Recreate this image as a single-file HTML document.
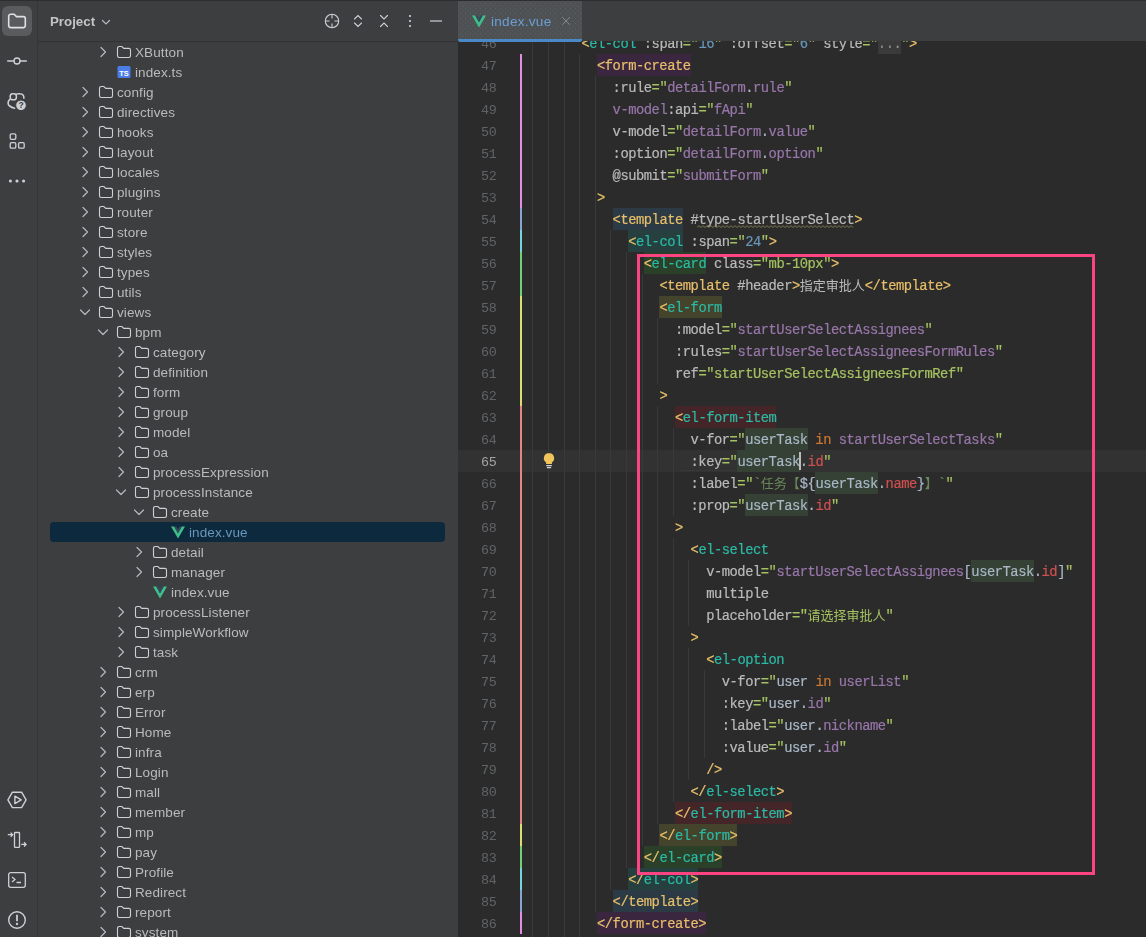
<!DOCTYPE html>
<html lang="zh"><head><meta charset="utf-8"><title>index.vue</title>
<style>
*{box-sizing:border-box;margin:0;padding:0}
html,body{width:1146px;height:937px;overflow:hidden;background:#3C3E40}
body{position:relative;font-family:"Liberation Sans","Noto Sans CJK SC",sans-serif;font-size:13px;color:#BBBBBB}
#topline{position:absolute;left:0;top:0;width:1146px;height:1px;background:#2D2D2E;z-index:20}
#strip{position:absolute;left:0;top:0;width:38px;height:937px;background:#3C3E40;border-right:1px solid #353638}
#strip .btn{position:absolute;left:2px;top:6px;width:30px;height:30px;border-radius:6px;background:#595B5D}
#strip svg{position:absolute;left:7px}
#proj{position:absolute;left:38px;top:0;width:420px;height:937px;background:#3C3E40;overflow:hidden}
#phead{position:absolute;left:0;top:0;width:420px;height:42px;border-bottom:1px solid #323232}
#phead .ttl{position:absolute;left:12px;top:0;line-height:44px;will-change:transform;font-weight:bold;color:#C4C4C4;font-size:13.3px}
#phead svg{position:absolute;top:13px}
.row{position:absolute;left:12px;width:395px;height:20px;margin-left:-38px;padding:0}
#tree{position:absolute;left:0;top:0;width:420px;height:937px}
#tree .row{left:50px;margin-left:-38px}
.row.sel{background:#0D293E;border-radius:4px}
.row .ic{position:absolute;top:2px;margin-left:-50px}
.row .tx{position:absolute;top:0;line-height:22px;height:20px;margin-left:-50px;white-space:pre;color:#BBBBBB;font-size:13.5px;letter-spacing:0.1px;will-change:transform}
.row .tx.mod{color:#6897BB}
#ed{position:absolute;left:458px;top:0;width:688px;height:937px;background:#2B2B2B;overflow:hidden}
#tabs{position:absolute;left:0;top:0;width:688px;height:41px;background:#3C3E40;z-index:10}
#tab{position:absolute;left:0;top:1px;width:124px;height:41px;background-color:#4E5153;background-image:radial-gradient(circle,#5D6062 0.5px,transparent 0.9px),radial-gradient(circle,#5D6062 0.5px,transparent 0.9px);background-size:5px 5px;background-position:0 0,2.5px 2.5px;border-bottom:3px solid #4A88C7;border-radius:0 0 2px 2px}
#tab .nm{position:absolute;left:33px;top:0;line-height:42px;color:#6A9FD4;font-size:13.6px;letter-spacing:0.25px;will-change:transform}
#tab svg{position:absolute}
.ln{position:absolute;left:0;width:38.5px;text-align:right;height:22px;line-height:26px;will-change:transform;font-family:"Liberation Mono",monospace;font-size:13.4px;letter-spacing:-0.24px;color:#606366}
.ln.cur{color:#A4A3A3}
.cl{position:absolute;left:61.2px;height:22px;line-height:26px;white-space:pre;font-family:"Liberation Mono","Noto Sans CJK SC",monospace;font-size:13.8px;letter-spacing:-0.4813px;color:#A9B7C6;will-change:transform;-webkit-text-stroke:0.2px}
.cl span{display:inline-block;height:22px;line-height:26px;vertical-align:top}
.cl .cj, .cl .x{font-family:"Liberation Mono","Noto Sans CJK SC",monospace;font-size:13px;letter-spacing:0;-webkit-text-stroke:0}
.t{color:#E8BF6A}.c{color:#2BBAA5}.a{color:#BABABA}.s{color:#A5C261}.p{color:#9876AA}.n{color:#6897BB}
.d{color:#A9B7C6}.k{color:#CC7832}.r{color:#CF5050}.g{color:#6A8759}.x{color:#BBBBBB}
.fold{color:#8C8C8C;background:#3A3A3A}
.h1{background:#3B2640}.h2{background:#2C3A45}.h3{background:#25403F}.h4{background:#2A4028}.h5{background:#44432B}.h6{background:#452628}
.idh{background:#344134}
.wavy{position:relative}
.wavy svg{position:absolute;left:-1px;top:16.5px}
.caret{width:0;position:relative}
.caret:after{content:"";position:absolute;left:-1px;top:2px;width:2px;height:18px;background:#BBBBBB}
#curline{position:absolute;left:0;top:450px;width:688px;height:22px;background:#323232}
.gd{position:absolute;width:1px;background:#393939;margin-left:-458px}
.st{position:absolute;left:62px;width:2px}
#pink{position:absolute;left:179px;top:254px;width:458px;height:621px;border:3px solid #FC4482;z-index:5}
#dots{position:absolute;left:220px;top:470px;width:58px;height:1px;background-image:linear-gradient(to right,#3E3E3E 50%,transparent 50%);background-size:2px 1px}
</style></head>
<body>
<div id="strip"><div class="btn"></div><svg style="top:11px" width="20" height="20" viewBox="0 0 20 20"><path d="M1.7 5.2 a2 2 0 0 1 2 -2 h3.4 l2.4 2.4 h6.8 a2 2 0 0 1 2 2 v7 a2 2 0 0 1 -2 2 h-12.6 a2 2 0 0 1 -2 -2 z" fill="none" stroke="#DFE1E5" stroke-width="1.6"/></svg><svg style="top:51px" width="20" height="20" viewBox="0 0 20 20"><circle cx="10" cy="10" r="3" fill="none" stroke="#CED0D6" stroke-width="1.4"/><path d="M0.2 10 H7 M13 10 H19.8" stroke="#CED0D6" stroke-width="1.4"/></svg><svg style="top:91px" width="20" height="20" viewBox="0 0 20 20"><rect x="3.2" y="2.8" width="6.2" height="6" rx="2.6" fill="none" stroke="#CED0D6" stroke-width="1.5"/><path d="M9.6 3.2 C10.4 2.7 11.6 2.6 13 2.8 C15.6 3.1 17 4.8 16.9 7.2" fill="none" stroke="#CED0D6" stroke-width="1.5" stroke-linecap="round"/><path d="M2.6 8.6 C0.6 10.2 0.6 13.6 2.6 15 C3.9 16 5.8 16.9 7.6 17.2" fill="none" stroke="#CED0D6" stroke-width="1.6" stroke-linecap="round"/><circle cx="14" cy="14.3" r="5.3" fill="#CED0D6" stroke="#3C3E40" stroke-width="1"/><text x="14" y="17.3" font-size="8.5" font-weight="bold" font-family="Liberation Sans, sans-serif" fill="#3C3E40" text-anchor="middle">?</text></svg><svg style="top:131px" width="20" height="20" viewBox="0 0 20 20"><rect x="3.2" y="2.8" width="5.6" height="5.6" rx="1.3" fill="none" stroke="#CED0D6" stroke-width="1.3"/><rect x="3.2" y="11.6" width="5.6" height="5.6" rx="1.3" fill="none" stroke="#CED0D6" stroke-width="1.3"/><rect x="11.6" y="11.6" width="5.6" height="5.6" rx="1.3" fill="none" stroke="#CED0D6" stroke-width="1.3"/></svg><svg style="top:171px" width="20" height="20" viewBox="0 0 20 20"><circle cx="3.4" cy="10" r="1.55" fill="#CED0D6"/><circle cx="10" cy="10" r="1.55" fill="#CED0D6"/><circle cx="16.6" cy="10" r="1.55" fill="#CED0D6"/></svg><svg style="top:790px" width="20" height="20" viewBox="0 0 20 20"><path d="M5.4 2.2 H14.6 L19.1 9.9 L14.6 17.6 H5.4 L0.9 9.9 Z" fill="none" stroke="#CED0D6" stroke-width="1.4" stroke-linejoin="round"/><path d="M7.9 6.2 L14.2 9.9 L7.9 13.6 Z" fill="none" stroke="#CED0D6" stroke-width="1.4" stroke-linejoin="round"/></svg><svg style="top:830px" width="20" height="20" viewBox="0 0 20 20"><rect x="7.5" y="2.5" width="5" height="14.8" rx="0.6" fill="none" stroke="#CED0D6" stroke-width="1.3"/><path d="M0.8 4.7 H5.4 M3.6 2.6 L5.7 4.7 L3.6 6.8 M14.2 14.4 H18.8 M17 12.3 L19.1 14.4 L17 16.5" fill="none" stroke="#CED0D6" stroke-width="1.3"/></svg><svg style="top:870px" width="20" height="20" viewBox="0 0 20 20"><rect x="1.7" y="2.7" width="16.6" height="14.6" rx="2" fill="none" stroke="#CED0D6" stroke-width="1.3"/><path d="M5 7 L8 9.5 L5 12 M9.5 12.5 H14" fill="none" stroke="#CED0D6" stroke-width="1.3"/></svg><svg style="top:910px" width="20" height="20" viewBox="0 0 20 20"><circle cx="10" cy="10" r="8.3" fill="none" stroke="#CED0D6" stroke-width="1.4"/><path d="M10 4.8 V11.3" stroke="#CED0D6" stroke-width="1.8"/><circle cx="10" cy="14" r="1.15" fill="#CED0D6"/></svg></div>
<div id="proj">
<div id="tree">
<div class="row" style="top:42px"><svg class="ic" style="left:95px" width="16" height="16" viewBox="0 0 16 16"><path d="M6 3.5 L10.5 8 L6 12.5" fill="none" stroke="#B4B8BF" stroke-width="1.2" stroke-linecap="round" stroke-linejoin="round"/></svg><svg class="ic" style="left:116px" width="16" height="16" viewBox="0 0 16 16"><path d="M1.5 4.2 a1.7 1.7 0 0 1 1.7 -1.7 h2.7 l1.9 1.9 h5 a1.7 1.7 0 0 1 1.7 1.7 v5.7 a1.7 1.7 0 0 1 -1.7 1.7 h-9.6 a1.7 1.7 0 0 1 -1.7 -1.7 z" fill="none" stroke="#CED0D6" stroke-width="1.1"/></svg><span class="tx" style="left:135px">XButton</span></div>
<div class="row" style="top:62px"><svg class="ic" style="left:116px" width="16" height="16" viewBox="0 0 16 16"><rect x="1.5" y="2" width="13" height="12" rx="1.5" fill="#4A7DE8"/><text x="8" y="11.6" font-family="Liberation Sans, sans-serif" font-weight="bold" font-size="7.5" fill="#fff" text-anchor="middle">TS</text></svg><span class="tx" style="left:135px">index.ts</span></div>
<div class="row" style="top:82px"><svg class="ic" style="left:77px" width="16" height="16" viewBox="0 0 16 16"><path d="M6 3.5 L10.5 8 L6 12.5" fill="none" stroke="#B4B8BF" stroke-width="1.2" stroke-linecap="round" stroke-linejoin="round"/></svg><svg class="ic" style="left:98px" width="16" height="16" viewBox="0 0 16 16"><path d="M1.5 4.2 a1.7 1.7 0 0 1 1.7 -1.7 h2.7 l1.9 1.9 h5 a1.7 1.7 0 0 1 1.7 1.7 v5.7 a1.7 1.7 0 0 1 -1.7 1.7 h-9.6 a1.7 1.7 0 0 1 -1.7 -1.7 z" fill="none" stroke="#CED0D6" stroke-width="1.1"/></svg><span class="tx" style="left:117px">config</span></div>
<div class="row" style="top:102px"><svg class="ic" style="left:77px" width="16" height="16" viewBox="0 0 16 16"><path d="M6 3.5 L10.5 8 L6 12.5" fill="none" stroke="#B4B8BF" stroke-width="1.2" stroke-linecap="round" stroke-linejoin="round"/></svg><svg class="ic" style="left:98px" width="16" height="16" viewBox="0 0 16 16"><path d="M1.5 4.2 a1.7 1.7 0 0 1 1.7 -1.7 h2.7 l1.9 1.9 h5 a1.7 1.7 0 0 1 1.7 1.7 v5.7 a1.7 1.7 0 0 1 -1.7 1.7 h-9.6 a1.7 1.7 0 0 1 -1.7 -1.7 z" fill="none" stroke="#CED0D6" stroke-width="1.1"/></svg><span class="tx" style="left:117px">directives</span></div>
<div class="row" style="top:122px"><svg class="ic" style="left:77px" width="16" height="16" viewBox="0 0 16 16"><path d="M6 3.5 L10.5 8 L6 12.5" fill="none" stroke="#B4B8BF" stroke-width="1.2" stroke-linecap="round" stroke-linejoin="round"/></svg><svg class="ic" style="left:98px" width="16" height="16" viewBox="0 0 16 16"><path d="M1.5 4.2 a1.7 1.7 0 0 1 1.7 -1.7 h2.7 l1.9 1.9 h5 a1.7 1.7 0 0 1 1.7 1.7 v5.7 a1.7 1.7 0 0 1 -1.7 1.7 h-9.6 a1.7 1.7 0 0 1 -1.7 -1.7 z" fill="none" stroke="#CED0D6" stroke-width="1.1"/></svg><span class="tx" style="left:117px">hooks</span></div>
<div class="row" style="top:142px"><svg class="ic" style="left:77px" width="16" height="16" viewBox="0 0 16 16"><path d="M6 3.5 L10.5 8 L6 12.5" fill="none" stroke="#B4B8BF" stroke-width="1.2" stroke-linecap="round" stroke-linejoin="round"/></svg><svg class="ic" style="left:98px" width="16" height="16" viewBox="0 0 16 16"><path d="M1.5 4.2 a1.7 1.7 0 0 1 1.7 -1.7 h2.7 l1.9 1.9 h5 a1.7 1.7 0 0 1 1.7 1.7 v5.7 a1.7 1.7 0 0 1 -1.7 1.7 h-9.6 a1.7 1.7 0 0 1 -1.7 -1.7 z" fill="none" stroke="#CED0D6" stroke-width="1.1"/></svg><span class="tx" style="left:117px">layout</span></div>
<div class="row" style="top:162px"><svg class="ic" style="left:77px" width="16" height="16" viewBox="0 0 16 16"><path d="M6 3.5 L10.5 8 L6 12.5" fill="none" stroke="#B4B8BF" stroke-width="1.2" stroke-linecap="round" stroke-linejoin="round"/></svg><svg class="ic" style="left:98px" width="16" height="16" viewBox="0 0 16 16"><path d="M1.5 4.2 a1.7 1.7 0 0 1 1.7 -1.7 h2.7 l1.9 1.9 h5 a1.7 1.7 0 0 1 1.7 1.7 v5.7 a1.7 1.7 0 0 1 -1.7 1.7 h-9.6 a1.7 1.7 0 0 1 -1.7 -1.7 z" fill="none" stroke="#CED0D6" stroke-width="1.1"/></svg><span class="tx" style="left:117px">locales</span></div>
<div class="row" style="top:182px"><svg class="ic" style="left:77px" width="16" height="16" viewBox="0 0 16 16"><path d="M6 3.5 L10.5 8 L6 12.5" fill="none" stroke="#B4B8BF" stroke-width="1.2" stroke-linecap="round" stroke-linejoin="round"/></svg><svg class="ic" style="left:98px" width="16" height="16" viewBox="0 0 16 16"><path d="M1.5 4.2 a1.7 1.7 0 0 1 1.7 -1.7 h2.7 l1.9 1.9 h5 a1.7 1.7 0 0 1 1.7 1.7 v5.7 a1.7 1.7 0 0 1 -1.7 1.7 h-9.6 a1.7 1.7 0 0 1 -1.7 -1.7 z" fill="none" stroke="#CED0D6" stroke-width="1.1"/></svg><span class="tx" style="left:117px">plugins</span></div>
<div class="row" style="top:202px"><svg class="ic" style="left:77px" width="16" height="16" viewBox="0 0 16 16"><path d="M6 3.5 L10.5 8 L6 12.5" fill="none" stroke="#B4B8BF" stroke-width="1.2" stroke-linecap="round" stroke-linejoin="round"/></svg><svg class="ic" style="left:98px" width="16" height="16" viewBox="0 0 16 16"><path d="M1.5 4.2 a1.7 1.7 0 0 1 1.7 -1.7 h2.7 l1.9 1.9 h5 a1.7 1.7 0 0 1 1.7 1.7 v5.7 a1.7 1.7 0 0 1 -1.7 1.7 h-9.6 a1.7 1.7 0 0 1 -1.7 -1.7 z" fill="none" stroke="#CED0D6" stroke-width="1.1"/></svg><span class="tx" style="left:117px">router</span></div>
<div class="row" style="top:222px"><svg class="ic" style="left:77px" width="16" height="16" viewBox="0 0 16 16"><path d="M6 3.5 L10.5 8 L6 12.5" fill="none" stroke="#B4B8BF" stroke-width="1.2" stroke-linecap="round" stroke-linejoin="round"/></svg><svg class="ic" style="left:98px" width="16" height="16" viewBox="0 0 16 16"><path d="M1.5 4.2 a1.7 1.7 0 0 1 1.7 -1.7 h2.7 l1.9 1.9 h5 a1.7 1.7 0 0 1 1.7 1.7 v5.7 a1.7 1.7 0 0 1 -1.7 1.7 h-9.6 a1.7 1.7 0 0 1 -1.7 -1.7 z" fill="none" stroke="#CED0D6" stroke-width="1.1"/></svg><span class="tx" style="left:117px">store</span></div>
<div class="row" style="top:242px"><svg class="ic" style="left:77px" width="16" height="16" viewBox="0 0 16 16"><path d="M6 3.5 L10.5 8 L6 12.5" fill="none" stroke="#B4B8BF" stroke-width="1.2" stroke-linecap="round" stroke-linejoin="round"/></svg><svg class="ic" style="left:98px" width="16" height="16" viewBox="0 0 16 16"><path d="M1.5 4.2 a1.7 1.7 0 0 1 1.7 -1.7 h2.7 l1.9 1.9 h5 a1.7 1.7 0 0 1 1.7 1.7 v5.7 a1.7 1.7 0 0 1 -1.7 1.7 h-9.6 a1.7 1.7 0 0 1 -1.7 -1.7 z" fill="none" stroke="#CED0D6" stroke-width="1.1"/></svg><span class="tx" style="left:117px">styles</span></div>
<div class="row" style="top:262px"><svg class="ic" style="left:77px" width="16" height="16" viewBox="0 0 16 16"><path d="M6 3.5 L10.5 8 L6 12.5" fill="none" stroke="#B4B8BF" stroke-width="1.2" stroke-linecap="round" stroke-linejoin="round"/></svg><svg class="ic" style="left:98px" width="16" height="16" viewBox="0 0 16 16"><path d="M1.5 4.2 a1.7 1.7 0 0 1 1.7 -1.7 h2.7 l1.9 1.9 h5 a1.7 1.7 0 0 1 1.7 1.7 v5.7 a1.7 1.7 0 0 1 -1.7 1.7 h-9.6 a1.7 1.7 0 0 1 -1.7 -1.7 z" fill="none" stroke="#CED0D6" stroke-width="1.1"/></svg><span class="tx" style="left:117px">types</span></div>
<div class="row" style="top:282px"><svg class="ic" style="left:77px" width="16" height="16" viewBox="0 0 16 16"><path d="M6 3.5 L10.5 8 L6 12.5" fill="none" stroke="#B4B8BF" stroke-width="1.2" stroke-linecap="round" stroke-linejoin="round"/></svg><svg class="ic" style="left:98px" width="16" height="16" viewBox="0 0 16 16"><path d="M1.5 4.2 a1.7 1.7 0 0 1 1.7 -1.7 h2.7 l1.9 1.9 h5 a1.7 1.7 0 0 1 1.7 1.7 v5.7 a1.7 1.7 0 0 1 -1.7 1.7 h-9.6 a1.7 1.7 0 0 1 -1.7 -1.7 z" fill="none" stroke="#CED0D6" stroke-width="1.1"/></svg><span class="tx" style="left:117px">utils</span></div>
<div class="row" style="top:302px"><svg class="ic" style="left:77px" width="16" height="16" viewBox="0 0 16 16"><path d="M3.5 6 L8 10.5 L12.5 6" fill="none" stroke="#B4B8BF" stroke-width="1.2" stroke-linecap="round" stroke-linejoin="round"/></svg><svg class="ic" style="left:98px" width="16" height="16" viewBox="0 0 16 16"><path d="M1.5 4.2 a1.7 1.7 0 0 1 1.7 -1.7 h2.7 l1.9 1.9 h5 a1.7 1.7 0 0 1 1.7 1.7 v5.7 a1.7 1.7 0 0 1 -1.7 1.7 h-9.6 a1.7 1.7 0 0 1 -1.7 -1.7 z" fill="none" stroke="#CED0D6" stroke-width="1.1"/></svg><span class="tx" style="left:117px">views</span></div>
<div class="row" style="top:322px"><svg class="ic" style="left:95px" width="16" height="16" viewBox="0 0 16 16"><path d="M3.5 6 L8 10.5 L12.5 6" fill="none" stroke="#B4B8BF" stroke-width="1.2" stroke-linecap="round" stroke-linejoin="round"/></svg><svg class="ic" style="left:116px" width="16" height="16" viewBox="0 0 16 16"><path d="M1.5 4.2 a1.7 1.7 0 0 1 1.7 -1.7 h2.7 l1.9 1.9 h5 a1.7 1.7 0 0 1 1.7 1.7 v5.7 a1.7 1.7 0 0 1 -1.7 1.7 h-9.6 a1.7 1.7 0 0 1 -1.7 -1.7 z" fill="none" stroke="#CED0D6" stroke-width="1.1"/></svg><span class="tx" style="left:135px">bpm</span></div>
<div class="row" style="top:342px"><svg class="ic" style="left:113px" width="16" height="16" viewBox="0 0 16 16"><path d="M6 3.5 L10.5 8 L6 12.5" fill="none" stroke="#B4B8BF" stroke-width="1.2" stroke-linecap="round" stroke-linejoin="round"/></svg><svg class="ic" style="left:134px" width="16" height="16" viewBox="0 0 16 16"><path d="M1.5 4.2 a1.7 1.7 0 0 1 1.7 -1.7 h2.7 l1.9 1.9 h5 a1.7 1.7 0 0 1 1.7 1.7 v5.7 a1.7 1.7 0 0 1 -1.7 1.7 h-9.6 a1.7 1.7 0 0 1 -1.7 -1.7 z" fill="none" stroke="#CED0D6" stroke-width="1.1"/></svg><span class="tx" style="left:153px">category</span></div>
<div class="row" style="top:362px"><svg class="ic" style="left:113px" width="16" height="16" viewBox="0 0 16 16"><path d="M6 3.5 L10.5 8 L6 12.5" fill="none" stroke="#B4B8BF" stroke-width="1.2" stroke-linecap="round" stroke-linejoin="round"/></svg><svg class="ic" style="left:134px" width="16" height="16" viewBox="0 0 16 16"><path d="M1.5 4.2 a1.7 1.7 0 0 1 1.7 -1.7 h2.7 l1.9 1.9 h5 a1.7 1.7 0 0 1 1.7 1.7 v5.7 a1.7 1.7 0 0 1 -1.7 1.7 h-9.6 a1.7 1.7 0 0 1 -1.7 -1.7 z" fill="none" stroke="#CED0D6" stroke-width="1.1"/></svg><span class="tx" style="left:153px">definition</span></div>
<div class="row" style="top:382px"><svg class="ic" style="left:113px" width="16" height="16" viewBox="0 0 16 16"><path d="M6 3.5 L10.5 8 L6 12.5" fill="none" stroke="#B4B8BF" stroke-width="1.2" stroke-linecap="round" stroke-linejoin="round"/></svg><svg class="ic" style="left:134px" width="16" height="16" viewBox="0 0 16 16"><path d="M1.5 4.2 a1.7 1.7 0 0 1 1.7 -1.7 h2.7 l1.9 1.9 h5 a1.7 1.7 0 0 1 1.7 1.7 v5.7 a1.7 1.7 0 0 1 -1.7 1.7 h-9.6 a1.7 1.7 0 0 1 -1.7 -1.7 z" fill="none" stroke="#CED0D6" stroke-width="1.1"/></svg><span class="tx" style="left:153px">form</span></div>
<div class="row" style="top:402px"><svg class="ic" style="left:113px" width="16" height="16" viewBox="0 0 16 16"><path d="M6 3.5 L10.5 8 L6 12.5" fill="none" stroke="#B4B8BF" stroke-width="1.2" stroke-linecap="round" stroke-linejoin="round"/></svg><svg class="ic" style="left:134px" width="16" height="16" viewBox="0 0 16 16"><path d="M1.5 4.2 a1.7 1.7 0 0 1 1.7 -1.7 h2.7 l1.9 1.9 h5 a1.7 1.7 0 0 1 1.7 1.7 v5.7 a1.7 1.7 0 0 1 -1.7 1.7 h-9.6 a1.7 1.7 0 0 1 -1.7 -1.7 z" fill="none" stroke="#CED0D6" stroke-width="1.1"/></svg><span class="tx" style="left:153px">group</span></div>
<div class="row" style="top:422px"><svg class="ic" style="left:113px" width="16" height="16" viewBox="0 0 16 16"><path d="M6 3.5 L10.5 8 L6 12.5" fill="none" stroke="#B4B8BF" stroke-width="1.2" stroke-linecap="round" stroke-linejoin="round"/></svg><svg class="ic" style="left:134px" width="16" height="16" viewBox="0 0 16 16"><path d="M1.5 4.2 a1.7 1.7 0 0 1 1.7 -1.7 h2.7 l1.9 1.9 h5 a1.7 1.7 0 0 1 1.7 1.7 v5.7 a1.7 1.7 0 0 1 -1.7 1.7 h-9.6 a1.7 1.7 0 0 1 -1.7 -1.7 z" fill="none" stroke="#CED0D6" stroke-width="1.1"/></svg><span class="tx" style="left:153px">model</span></div>
<div class="row" style="top:442px"><svg class="ic" style="left:113px" width="16" height="16" viewBox="0 0 16 16"><path d="M6 3.5 L10.5 8 L6 12.5" fill="none" stroke="#B4B8BF" stroke-width="1.2" stroke-linecap="round" stroke-linejoin="round"/></svg><svg class="ic" style="left:134px" width="16" height="16" viewBox="0 0 16 16"><path d="M1.5 4.2 a1.7 1.7 0 0 1 1.7 -1.7 h2.7 l1.9 1.9 h5 a1.7 1.7 0 0 1 1.7 1.7 v5.7 a1.7 1.7 0 0 1 -1.7 1.7 h-9.6 a1.7 1.7 0 0 1 -1.7 -1.7 z" fill="none" stroke="#CED0D6" stroke-width="1.1"/></svg><span class="tx" style="left:153px">oa</span></div>
<div class="row" style="top:462px"><svg class="ic" style="left:113px" width="16" height="16" viewBox="0 0 16 16"><path d="M6 3.5 L10.5 8 L6 12.5" fill="none" stroke="#B4B8BF" stroke-width="1.2" stroke-linecap="round" stroke-linejoin="round"/></svg><svg class="ic" style="left:134px" width="16" height="16" viewBox="0 0 16 16"><path d="M1.5 4.2 a1.7 1.7 0 0 1 1.7 -1.7 h2.7 l1.9 1.9 h5 a1.7 1.7 0 0 1 1.7 1.7 v5.7 a1.7 1.7 0 0 1 -1.7 1.7 h-9.6 a1.7 1.7 0 0 1 -1.7 -1.7 z" fill="none" stroke="#CED0D6" stroke-width="1.1"/></svg><span class="tx" style="left:153px">processExpression</span></div>
<div class="row" style="top:482px"><svg class="ic" style="left:113px" width="16" height="16" viewBox="0 0 16 16"><path d="M3.5 6 L8 10.5 L12.5 6" fill="none" stroke="#B4B8BF" stroke-width="1.2" stroke-linecap="round" stroke-linejoin="round"/></svg><svg class="ic" style="left:134px" width="16" height="16" viewBox="0 0 16 16"><path d="M1.5 4.2 a1.7 1.7 0 0 1 1.7 -1.7 h2.7 l1.9 1.9 h5 a1.7 1.7 0 0 1 1.7 1.7 v5.7 a1.7 1.7 0 0 1 -1.7 1.7 h-9.6 a1.7 1.7 0 0 1 -1.7 -1.7 z" fill="none" stroke="#CED0D6" stroke-width="1.1"/></svg><span class="tx" style="left:153px">processInstance</span></div>
<div class="row" style="top:502px"><svg class="ic" style="left:131px" width="16" height="16" viewBox="0 0 16 16"><path d="M3.5 6 L8 10.5 L12.5 6" fill="none" stroke="#B4B8BF" stroke-width="1.2" stroke-linecap="round" stroke-linejoin="round"/></svg><svg class="ic" style="left:152px" width="16" height="16" viewBox="0 0 16 16"><path d="M1.5 4.2 a1.7 1.7 0 0 1 1.7 -1.7 h2.7 l1.9 1.9 h5 a1.7 1.7 0 0 1 1.7 1.7 v5.7 a1.7 1.7 0 0 1 -1.7 1.7 h-9.6 a1.7 1.7 0 0 1 -1.7 -1.7 z" fill="none" stroke="#CED0D6" stroke-width="1.1"/></svg><span class="tx" style="left:171px">create</span></div>
<div class="row sel" style="top:522px"><svg class="ic" style="left:170px" width="16" height="16" viewBox="0 0 16 16"><path d="M1 2.5 H4.2 L8 9.2 L11.8 2.5 H15 L8 14.5 Z" fill="#3DBF8A"/><path d="M4.2 2.5 H6.4 L8 5.4 L9.6 2.5 H11.8 L8 9.2 Z" fill="#35495E"/></svg><span class="tx mod" style="left:189px">index.vue</span></div>
<div class="row" style="top:542px"><svg class="ic" style="left:131px" width="16" height="16" viewBox="0 0 16 16"><path d="M6 3.5 L10.5 8 L6 12.5" fill="none" stroke="#B4B8BF" stroke-width="1.2" stroke-linecap="round" stroke-linejoin="round"/></svg><svg class="ic" style="left:152px" width="16" height="16" viewBox="0 0 16 16"><path d="M1.5 4.2 a1.7 1.7 0 0 1 1.7 -1.7 h2.7 l1.9 1.9 h5 a1.7 1.7 0 0 1 1.7 1.7 v5.7 a1.7 1.7 0 0 1 -1.7 1.7 h-9.6 a1.7 1.7 0 0 1 -1.7 -1.7 z" fill="none" stroke="#CED0D6" stroke-width="1.1"/></svg><span class="tx" style="left:171px">detail</span></div>
<div class="row" style="top:562px"><svg class="ic" style="left:131px" width="16" height="16" viewBox="0 0 16 16"><path d="M6 3.5 L10.5 8 L6 12.5" fill="none" stroke="#B4B8BF" stroke-width="1.2" stroke-linecap="round" stroke-linejoin="round"/></svg><svg class="ic" style="left:152px" width="16" height="16" viewBox="0 0 16 16"><path d="M1.5 4.2 a1.7 1.7 0 0 1 1.7 -1.7 h2.7 l1.9 1.9 h5 a1.7 1.7 0 0 1 1.7 1.7 v5.7 a1.7 1.7 0 0 1 -1.7 1.7 h-9.6 a1.7 1.7 0 0 1 -1.7 -1.7 z" fill="none" stroke="#CED0D6" stroke-width="1.1"/></svg><span class="tx" style="left:171px">manager</span></div>
<div class="row" style="top:582px"><svg class="ic" style="left:152px" width="16" height="16" viewBox="0 0 16 16"><path d="M1 2.5 H4.2 L8 9.2 L11.8 2.5 H15 L8 14.5 Z" fill="#3DBF8A"/><path d="M4.2 2.5 H6.4 L8 5.4 L9.6 2.5 H11.8 L8 9.2 Z" fill="#35495E"/></svg><span class="tx" style="left:171px">index.vue</span></div>
<div class="row" style="top:602px"><svg class="ic" style="left:113px" width="16" height="16" viewBox="0 0 16 16"><path d="M6 3.5 L10.5 8 L6 12.5" fill="none" stroke="#B4B8BF" stroke-width="1.2" stroke-linecap="round" stroke-linejoin="round"/></svg><svg class="ic" style="left:134px" width="16" height="16" viewBox="0 0 16 16"><path d="M1.5 4.2 a1.7 1.7 0 0 1 1.7 -1.7 h2.7 l1.9 1.9 h5 a1.7 1.7 0 0 1 1.7 1.7 v5.7 a1.7 1.7 0 0 1 -1.7 1.7 h-9.6 a1.7 1.7 0 0 1 -1.7 -1.7 z" fill="none" stroke="#CED0D6" stroke-width="1.1"/></svg><span class="tx" style="left:153px">processListener</span></div>
<div class="row" style="top:622px"><svg class="ic" style="left:113px" width="16" height="16" viewBox="0 0 16 16"><path d="M6 3.5 L10.5 8 L6 12.5" fill="none" stroke="#B4B8BF" stroke-width="1.2" stroke-linecap="round" stroke-linejoin="round"/></svg><svg class="ic" style="left:134px" width="16" height="16" viewBox="0 0 16 16"><path d="M1.5 4.2 a1.7 1.7 0 0 1 1.7 -1.7 h2.7 l1.9 1.9 h5 a1.7 1.7 0 0 1 1.7 1.7 v5.7 a1.7 1.7 0 0 1 -1.7 1.7 h-9.6 a1.7 1.7 0 0 1 -1.7 -1.7 z" fill="none" stroke="#CED0D6" stroke-width="1.1"/></svg><span class="tx" style="left:153px">simpleWorkflow</span></div>
<div class="row" style="top:642px"><svg class="ic" style="left:113px" width="16" height="16" viewBox="0 0 16 16"><path d="M6 3.5 L10.5 8 L6 12.5" fill="none" stroke="#B4B8BF" stroke-width="1.2" stroke-linecap="round" stroke-linejoin="round"/></svg><svg class="ic" style="left:134px" width="16" height="16" viewBox="0 0 16 16"><path d="M1.5 4.2 a1.7 1.7 0 0 1 1.7 -1.7 h2.7 l1.9 1.9 h5 a1.7 1.7 0 0 1 1.7 1.7 v5.7 a1.7 1.7 0 0 1 -1.7 1.7 h-9.6 a1.7 1.7 0 0 1 -1.7 -1.7 z" fill="none" stroke="#CED0D6" stroke-width="1.1"/></svg><span class="tx" style="left:153px">task</span></div>
<div class="row" style="top:662px"><svg class="ic" style="left:95px" width="16" height="16" viewBox="0 0 16 16"><path d="M6 3.5 L10.5 8 L6 12.5" fill="none" stroke="#B4B8BF" stroke-width="1.2" stroke-linecap="round" stroke-linejoin="round"/></svg><svg class="ic" style="left:116px" width="16" height="16" viewBox="0 0 16 16"><path d="M1.5 4.2 a1.7 1.7 0 0 1 1.7 -1.7 h2.7 l1.9 1.9 h5 a1.7 1.7 0 0 1 1.7 1.7 v5.7 a1.7 1.7 0 0 1 -1.7 1.7 h-9.6 a1.7 1.7 0 0 1 -1.7 -1.7 z" fill="none" stroke="#CED0D6" stroke-width="1.1"/></svg><span class="tx" style="left:135px">crm</span></div>
<div class="row" style="top:682px"><svg class="ic" style="left:95px" width="16" height="16" viewBox="0 0 16 16"><path d="M6 3.5 L10.5 8 L6 12.5" fill="none" stroke="#B4B8BF" stroke-width="1.2" stroke-linecap="round" stroke-linejoin="round"/></svg><svg class="ic" style="left:116px" width="16" height="16" viewBox="0 0 16 16"><path d="M1.5 4.2 a1.7 1.7 0 0 1 1.7 -1.7 h2.7 l1.9 1.9 h5 a1.7 1.7 0 0 1 1.7 1.7 v5.7 a1.7 1.7 0 0 1 -1.7 1.7 h-9.6 a1.7 1.7 0 0 1 -1.7 -1.7 z" fill="none" stroke="#CED0D6" stroke-width="1.1"/></svg><span class="tx" style="left:135px">erp</span></div>
<div class="row" style="top:702px"><svg class="ic" style="left:95px" width="16" height="16" viewBox="0 0 16 16"><path d="M6 3.5 L10.5 8 L6 12.5" fill="none" stroke="#B4B8BF" stroke-width="1.2" stroke-linecap="round" stroke-linejoin="round"/></svg><svg class="ic" style="left:116px" width="16" height="16" viewBox="0 0 16 16"><path d="M1.5 4.2 a1.7 1.7 0 0 1 1.7 -1.7 h2.7 l1.9 1.9 h5 a1.7 1.7 0 0 1 1.7 1.7 v5.7 a1.7 1.7 0 0 1 -1.7 1.7 h-9.6 a1.7 1.7 0 0 1 -1.7 -1.7 z" fill="none" stroke="#CED0D6" stroke-width="1.1"/></svg><span class="tx" style="left:135px">Error</span></div>
<div class="row" style="top:722px"><svg class="ic" style="left:95px" width="16" height="16" viewBox="0 0 16 16"><path d="M6 3.5 L10.5 8 L6 12.5" fill="none" stroke="#B4B8BF" stroke-width="1.2" stroke-linecap="round" stroke-linejoin="round"/></svg><svg class="ic" style="left:116px" width="16" height="16" viewBox="0 0 16 16"><path d="M1.5 4.2 a1.7 1.7 0 0 1 1.7 -1.7 h2.7 l1.9 1.9 h5 a1.7 1.7 0 0 1 1.7 1.7 v5.7 a1.7 1.7 0 0 1 -1.7 1.7 h-9.6 a1.7 1.7 0 0 1 -1.7 -1.7 z" fill="none" stroke="#CED0D6" stroke-width="1.1"/></svg><span class="tx" style="left:135px">Home</span></div>
<div class="row" style="top:742px"><svg class="ic" style="left:95px" width="16" height="16" viewBox="0 0 16 16"><path d="M6 3.5 L10.5 8 L6 12.5" fill="none" stroke="#B4B8BF" stroke-width="1.2" stroke-linecap="round" stroke-linejoin="round"/></svg><svg class="ic" style="left:116px" width="16" height="16" viewBox="0 0 16 16"><path d="M1.5 4.2 a1.7 1.7 0 0 1 1.7 -1.7 h2.7 l1.9 1.9 h5 a1.7 1.7 0 0 1 1.7 1.7 v5.7 a1.7 1.7 0 0 1 -1.7 1.7 h-9.6 a1.7 1.7 0 0 1 -1.7 -1.7 z" fill="none" stroke="#CED0D6" stroke-width="1.1"/></svg><span class="tx" style="left:135px">infra</span></div>
<div class="row" style="top:762px"><svg class="ic" style="left:95px" width="16" height="16" viewBox="0 0 16 16"><path d="M6 3.5 L10.5 8 L6 12.5" fill="none" stroke="#B4B8BF" stroke-width="1.2" stroke-linecap="round" stroke-linejoin="round"/></svg><svg class="ic" style="left:116px" width="16" height="16" viewBox="0 0 16 16"><path d="M1.5 4.2 a1.7 1.7 0 0 1 1.7 -1.7 h2.7 l1.9 1.9 h5 a1.7 1.7 0 0 1 1.7 1.7 v5.7 a1.7 1.7 0 0 1 -1.7 1.7 h-9.6 a1.7 1.7 0 0 1 -1.7 -1.7 z" fill="none" stroke="#CED0D6" stroke-width="1.1"/></svg><span class="tx" style="left:135px">Login</span></div>
<div class="row" style="top:782px"><svg class="ic" style="left:95px" width="16" height="16" viewBox="0 0 16 16"><path d="M6 3.5 L10.5 8 L6 12.5" fill="none" stroke="#B4B8BF" stroke-width="1.2" stroke-linecap="round" stroke-linejoin="round"/></svg><svg class="ic" style="left:116px" width="16" height="16" viewBox="0 0 16 16"><path d="M1.5 4.2 a1.7 1.7 0 0 1 1.7 -1.7 h2.7 l1.9 1.9 h5 a1.7 1.7 0 0 1 1.7 1.7 v5.7 a1.7 1.7 0 0 1 -1.7 1.7 h-9.6 a1.7 1.7 0 0 1 -1.7 -1.7 z" fill="none" stroke="#CED0D6" stroke-width="1.1"/></svg><span class="tx" style="left:135px">mall</span></div>
<div class="row" style="top:802px"><svg class="ic" style="left:95px" width="16" height="16" viewBox="0 0 16 16"><path d="M6 3.5 L10.5 8 L6 12.5" fill="none" stroke="#B4B8BF" stroke-width="1.2" stroke-linecap="round" stroke-linejoin="round"/></svg><svg class="ic" style="left:116px" width="16" height="16" viewBox="0 0 16 16"><path d="M1.5 4.2 a1.7 1.7 0 0 1 1.7 -1.7 h2.7 l1.9 1.9 h5 a1.7 1.7 0 0 1 1.7 1.7 v5.7 a1.7 1.7 0 0 1 -1.7 1.7 h-9.6 a1.7 1.7 0 0 1 -1.7 -1.7 z" fill="none" stroke="#CED0D6" stroke-width="1.1"/></svg><span class="tx" style="left:135px">member</span></div>
<div class="row" style="top:822px"><svg class="ic" style="left:95px" width="16" height="16" viewBox="0 0 16 16"><path d="M6 3.5 L10.5 8 L6 12.5" fill="none" stroke="#B4B8BF" stroke-width="1.2" stroke-linecap="round" stroke-linejoin="round"/></svg><svg class="ic" style="left:116px" width="16" height="16" viewBox="0 0 16 16"><path d="M1.5 4.2 a1.7 1.7 0 0 1 1.7 -1.7 h2.7 l1.9 1.9 h5 a1.7 1.7 0 0 1 1.7 1.7 v5.7 a1.7 1.7 0 0 1 -1.7 1.7 h-9.6 a1.7 1.7 0 0 1 -1.7 -1.7 z" fill="none" stroke="#CED0D6" stroke-width="1.1"/></svg><span class="tx" style="left:135px">mp</span></div>
<div class="row" style="top:842px"><svg class="ic" style="left:95px" width="16" height="16" viewBox="0 0 16 16"><path d="M6 3.5 L10.5 8 L6 12.5" fill="none" stroke="#B4B8BF" stroke-width="1.2" stroke-linecap="round" stroke-linejoin="round"/></svg><svg class="ic" style="left:116px" width="16" height="16" viewBox="0 0 16 16"><path d="M1.5 4.2 a1.7 1.7 0 0 1 1.7 -1.7 h2.7 l1.9 1.9 h5 a1.7 1.7 0 0 1 1.7 1.7 v5.7 a1.7 1.7 0 0 1 -1.7 1.7 h-9.6 a1.7 1.7 0 0 1 -1.7 -1.7 z" fill="none" stroke="#CED0D6" stroke-width="1.1"/></svg><span class="tx" style="left:135px">pay</span></div>
<div class="row" style="top:862px"><svg class="ic" style="left:95px" width="16" height="16" viewBox="0 0 16 16"><path d="M6 3.5 L10.5 8 L6 12.5" fill="none" stroke="#B4B8BF" stroke-width="1.2" stroke-linecap="round" stroke-linejoin="round"/></svg><svg class="ic" style="left:116px" width="16" height="16" viewBox="0 0 16 16"><path d="M1.5 4.2 a1.7 1.7 0 0 1 1.7 -1.7 h2.7 l1.9 1.9 h5 a1.7 1.7 0 0 1 1.7 1.7 v5.7 a1.7 1.7 0 0 1 -1.7 1.7 h-9.6 a1.7 1.7 0 0 1 -1.7 -1.7 z" fill="none" stroke="#CED0D6" stroke-width="1.1"/></svg><span class="tx" style="left:135px">Profile</span></div>
<div class="row" style="top:882px"><svg class="ic" style="left:95px" width="16" height="16" viewBox="0 0 16 16"><path d="M6 3.5 L10.5 8 L6 12.5" fill="none" stroke="#B4B8BF" stroke-width="1.2" stroke-linecap="round" stroke-linejoin="round"/></svg><svg class="ic" style="left:116px" width="16" height="16" viewBox="0 0 16 16"><path d="M1.5 4.2 a1.7 1.7 0 0 1 1.7 -1.7 h2.7 l1.9 1.9 h5 a1.7 1.7 0 0 1 1.7 1.7 v5.7 a1.7 1.7 0 0 1 -1.7 1.7 h-9.6 a1.7 1.7 0 0 1 -1.7 -1.7 z" fill="none" stroke="#CED0D6" stroke-width="1.1"/></svg><span class="tx" style="left:135px">Redirect</span></div>
<div class="row" style="top:902px"><svg class="ic" style="left:95px" width="16" height="16" viewBox="0 0 16 16"><path d="M6 3.5 L10.5 8 L6 12.5" fill="none" stroke="#B4B8BF" stroke-width="1.2" stroke-linecap="round" stroke-linejoin="round"/></svg><svg class="ic" style="left:116px" width="16" height="16" viewBox="0 0 16 16"><path d="M1.5 4.2 a1.7 1.7 0 0 1 1.7 -1.7 h2.7 l1.9 1.9 h5 a1.7 1.7 0 0 1 1.7 1.7 v5.7 a1.7 1.7 0 0 1 -1.7 1.7 h-9.6 a1.7 1.7 0 0 1 -1.7 -1.7 z" fill="none" stroke="#CED0D6" stroke-width="1.1"/></svg><span class="tx" style="left:135px">report</span></div>
<div class="row" style="top:922px"><svg class="ic" style="left:95px" width="16" height="16" viewBox="0 0 16 16"><path d="M6 3.5 L10.5 8 L6 12.5" fill="none" stroke="#B4B8BF" stroke-width="1.2" stroke-linecap="round" stroke-linejoin="round"/></svg><svg class="ic" style="left:116px" width="16" height="16" viewBox="0 0 16 16"><path d="M1.5 4.2 a1.7 1.7 0 0 1 1.7 -1.7 h2.7 l1.9 1.9 h5 a1.7 1.7 0 0 1 1.7 1.7 v5.7 a1.7 1.7 0 0 1 -1.7 1.7 h-9.6 a1.7 1.7 0 0 1 -1.7 -1.7 z" fill="none" stroke="#CED0D6" stroke-width="1.1"/></svg><span class="tx" style="left:135px">system</span></div>
</div>
<div id="phead" style="background:#3C3E40;z-index:3"><span class="ttl">Project</span><svg style="left:60px;top:14px" width="16" height="16" viewBox="0 0 16 16"><path d="M4.5 6.5 L8 10 L11.5 6.5" fill="none" stroke="#B4B8BF" stroke-width="1.2" stroke-linecap="round"/></svg><svg style="left:286px" width="16" height="16" viewBox="0 0 16 16"><circle cx="8" cy="8" r="6.7" fill="none" stroke="#CED0D6" stroke-width="1.1"/><path d="M8 1.3 V5.6 M8 10.4 V14.7 M1.3 8 H5.6 M10.4 8 H14.7" stroke="#CED0D6" stroke-width="1.1"/></svg><svg style="left:312px" width="16" height="16" viewBox="0 0 16 16"><path d="M4.5 6 L8 2.5 L11.5 6 M4.5 10 L8 13.5 L11.5 10" fill="none" stroke="#CED0D6" stroke-width="1.1" stroke-linecap="round"/></svg><svg style="left:338px" width="16" height="16" viewBox="0 0 16 16"><path d="M4.5 2.5 L8 6 L11.5 2.5 M4.5 13.5 L8 10 L11.5 13.5" fill="none" stroke="#CED0D6" stroke-width="1.1" stroke-linecap="round"/></svg><svg style="left:364px" width="16" height="16" viewBox="0 0 16 16"><circle cx="8" cy="3" r="1.1" fill="#CED0D6"/><circle cx="8" cy="8" r="1.1" fill="#CED0D6"/><circle cx="8" cy="13" r="1.1" fill="#CED0D6"/></svg><svg style="left:390px" width="16" height="16" viewBox="0 0 16 16"><path d="M2 8 H14" stroke="#CED0D6" stroke-width="1.2"/></svg></div>
</div>
<div id="ed">
<div id="curline"></div>
<div class="gd" style="left:532.4px;top:32px;height:924px"></div>
<div class="gd" style="left:548.0px;top:32px;height:924px"></div>
<div class="gd" style="left:563.6px;top:32px;height:924px"></div>
<div class="gd" style="left:579.2px;top:54px;height:902px"></div>
<div class="gd" style="left:594.8px;top:76px;height:836px"></div>
<div class="gd" style="left:610.4px;top:230px;height:660px"></div>
<div class="gd" style="left:626.0px;top:252px;height:616px"></div>
<div class="gd" style="left:641.6px;top:274px;height:572px"></div>
<div class="gd" style="left:657.2px;top:318px;height:66px"></div>
<div class="gd" style="left:657.2px;top:406px;height:418px"></div>
<div class="gd" style="left:672.8px;top:428px;height:88px"></div>
<div class="gd" style="left:672.8px;top:538px;height:264px"></div>
<div class="gd" style="left:688.4px;top:560px;height:66px"></div>
<div class="gd" style="left:688.4px;top:648px;height:132px"></div>
<div class="gd" style="left:704.0px;top:670px;height:88px"></div>
<div class="st" style="top:54px;height:154px;background:#E48DE6"></div>
<div class="st" style="top:208px;height:22px;background:#8AA2D2"></div>
<div class="st" style="top:230px;height:22px;background:#74D4DC"></div>
<div class="st" style="top:252px;height:44px;background:#74D074"></div>
<div class="st" style="top:296px;height:110px;background:#DEDC70"></div>
<div class="st" style="top:406px;height:418px;background:#E28585"></div>
<div class="st" style="top:824px;height:22px;background:#DEDC70"></div>
<div class="st" style="top:846px;height:22px;background:#74D074"></div>
<div class="st" style="top:868px;height:22px;background:#74D4DC"></div>
<div class="st" style="top:890px;height:22px;background:#8AA2D2"></div>
<div class="st" style="top:912px;height:22px;background:#E48DE6"></div>
<div id="dots"></div>
<div class="ln" style="top:32px">46</div>
<div class="cl" style="top:32px">        <span class="t">&lt;</span><span class="c">el-col</span><span class="a"> :span</span><span class="s">="</span><span class="n">16</span><span class="s">"</span><span class="a"> :offset</span><span class="s">="</span><span class="n">6</span><span class="s">"</span><span class="a"> style</span><span class="s">="</span><span class="fold">...</span><span class="s">"</span><span class="t">&gt;</span></div>
<div class="ln" style="top:54px">47</div>
<div class="cl" style="top:54px">          <span class="t hl h1">&lt;form-create</span></div>
<div class="ln" style="top:76px">48</div>
<div class="cl" style="top:76px">            <span class="a">:rule</span><span class="s">="</span><span class="p">detailForm</span><span class="d">.</span><span class="p">rule</span><span class="s">"</span></div>
<div class="ln" style="top:98px">49</div>
<div class="cl" style="top:98px">            <span class="p">v-model</span><span class="a">:api</span><span class="s">="</span><span class="p">fApi</span><span class="s">"</span></div>
<div class="ln" style="top:120px">50</div>
<div class="cl" style="top:120px">            <span class="a">v-model</span><span class="s">="</span><span class="p">detailForm</span><span class="d">.</span><span class="p">value</span><span class="s">"</span></div>
<div class="ln" style="top:142px">51</div>
<div class="cl" style="top:142px">            <span class="a">:option</span><span class="s">="</span><span class="p">detailForm</span><span class="d">.</span><span class="p">option</span><span class="s">"</span></div>
<div class="ln" style="top:164px">52</div>
<div class="cl" style="top:164px">            <span class="a">@submit</span><span class="s">="</span><span class="p">submitForm</span><span class="s">"</span></div>
<div class="ln" style="top:186px">53</div>
<div class="cl" style="top:186px">          <span class="t">&gt;</span></div>
<div class="ln" style="top:208px">54</div>
<div class="cl" style="top:208px">            <span class="t hl h2">&lt;template</span><span class="a"> #</span><span class="a wavy">type-startUserSelect<svg width="157" height="4" viewBox="0 0 157 4"><path d="M0 2.6 l2 -2 l2 2 l2 -2 l2 2 l2 -2 l2 2 l2 -2 l2 2 l2 -2 l2 2 l2 -2 l2 2 l2 -2 l2 2 l2 -2 l2 2 l2 -2 l2 2 l2 -2 l2 2 l2 -2 l2 2 l2 -2 l2 2 l2 -2 l2 2 l2 -2 l2 2 l2 -2 l2 2 l2 -2 l2 2 l2 -2 l2 2 l2 -2 l2 2 l2 -2 l2 2 l2 -2 l2 2 l2 -2 l2 2 l2 -2 l2 2 l2 -2 l2 2 l2 -2 l2 2 l2 -2 l2 2 l2 -2 l2 2 l2 -2 l2 2 l2 -2 l2 2 l2 -2 l2 2 l2 -2 l2 2 l2 -2 l2 2 l2 -2 l2 2 l2 -2 l2 2 l2 -2 l2 2 l2 -2 l2 2 l2 -2 l2 2 l2 -2 l2 2 l2 -2 l2 2 l2 -2 l2 2" fill="none" stroke="#8C8454" stroke-width="0.9"/></svg></span><span class="t">&gt;</span></div>
<div class="ln" style="top:230px">55</div>
<div class="cl" style="top:230px">              <span class="hl h3"><span class="t">&lt;</span><span class="c">el-col</span></span><span class="a"> :span</span><span class="s">="</span><span class="n">24</span><span class="s">"</span><span class="t">&gt;</span></div>
<div class="ln" style="top:252px">56</div>
<div class="cl" style="top:252px">                <span class="hl h4"><span class="t">&lt;</span><span class="c">el-card</span></span><span class="a"> class</span><span class="s">="mb-10px"</span><span class="t">&gt;</span></div>
<div class="ln" style="top:274px">57</div>
<div class="cl" style="top:274px">                  <span class="t">&lt;template</span><span class="a"> #header</span><span class="t">&gt;</span><span class="x">指定审批人</span><span class="t">&lt;/template&gt;</span></div>
<div class="ln" style="top:296px">58</div>
<div class="cl" style="top:296px">                  <span class="hl h5"><span class="t">&lt;</span><span class="c">el-form</span></span></div>
<div class="ln" style="top:318px">59</div>
<div class="cl" style="top:318px">                    <span class="a">:model</span><span class="s">="</span><span class="p">startUserSelectAssignees</span><span class="s">"</span></div>
<div class="ln" style="top:340px">60</div>
<div class="cl" style="top:340px">                    <span class="a">:rules</span><span class="s">="</span><span class="p">startUserSelectAssigneesFormRules</span><span class="s">"</span></div>
<div class="ln" style="top:362px">61</div>
<div class="cl" style="top:362px">                    <span class="a">ref</span><span class="s">="startUserSelectAssigneesFormRef"</span></div>
<div class="ln" style="top:384px">62</div>
<div class="cl" style="top:384px">                  <span class="t">&gt;</span></div>
<div class="ln" style="top:406px">63</div>
<div class="cl" style="top:406px">                    <span class="hl h6"><span class="t">&lt;</span><span class="c">el-form-item</span></span></div>
<div class="ln" style="top:428px">64</div>
<div class="cl" style="top:428px">                      <span class="a">v-for</span><span class="s">="</span><span class="d idh">userTask</span><span class="k"> in </span><span class="p">startUserSelectTasks</span><span class="s">"</span></div>
<div class="ln cur" style="top:450px">65</div>
<div class="cl" style="top:450px">                      <span class="a">:key</span><span class="s">="</span><span class="d idh">userTask</span><span class="caret"></span><span class="d">.</span><span class="r">id</span><span class="s">"</span></div>
<div class="ln" style="top:472px">66</div>
<div class="cl" style="top:472px">                      <span class="a">:label</span><span class="s">="</span><span class="g">`</span><span class="g cj">任务【</span><span class="d">${</span><span class="d idh">userTask</span><span class="d">.</span><span class="r">name</span><span class="d">}</span><span class="g cj">】</span><span class="g">`</span><span class="s">"</span></div>
<div class="ln" style="top:494px">67</div>
<div class="cl" style="top:494px">                      <span class="a">:prop</span><span class="s">="</span><span class="d idh">userTask</span><span class="d">.</span><span class="r">id</span><span class="s">"</span></div>
<div class="ln" style="top:516px">68</div>
<div class="cl" style="top:516px">                    <span class="t">&gt;</span></div>
<div class="ln" style="top:538px">69</div>
<div class="cl" style="top:538px">                      <span class="t">&lt;</span><span class="c">el-select</span></div>
<div class="ln" style="top:560px">70</div>
<div class="cl" style="top:560px">                        <span class="a">v-model</span><span class="s">="</span><span class="p">startUserSelectAssignees</span><span class="d">[</span><span class="d idh">userTask</span><span class="d">.</span><span class="r">id</span><span class="d">]</span><span class="s">"</span></div>
<div class="ln" style="top:582px">71</div>
<div class="cl" style="top:582px">                        <span class="a">multiple</span></div>
<div class="ln" style="top:604px">72</div>
<div class="cl" style="top:604px">                        <span class="a">placeholder</span><span class="s">="</span><span class="s cj">请选择审批人</span><span class="s">"</span></div>
<div class="ln" style="top:626px">73</div>
<div class="cl" style="top:626px">                      <span class="t">&gt;</span></div>
<div class="ln" style="top:648px">74</div>
<div class="cl" style="top:648px">                        <span class="t">&lt;</span><span class="c">el-option</span></div>
<div class="ln" style="top:670px">75</div>
<div class="cl" style="top:670px">                          <span class="a">v-for</span><span class="s">="</span><span class="d">user</span><span class="k"> in </span><span class="p">userList</span><span class="s">"</span></div>
<div class="ln" style="top:692px">76</div>
<div class="cl" style="top:692px">                          <span class="a">:key</span><span class="s">="</span><span class="d">user</span><span class="d">.</span><span class="p">id</span><span class="s">"</span></div>
<div class="ln" style="top:714px">77</div>
<div class="cl" style="top:714px">                          <span class="a">:label</span><span class="s">="</span><span class="d">user</span><span class="d">.</span><span class="p">nickname</span><span class="s">"</span></div>
<div class="ln" style="top:736px">78</div>
<div class="cl" style="top:736px">                          <span class="a">:value</span><span class="s">="</span><span class="d">user</span><span class="d">.</span><span class="p">id</span><span class="s">"</span></div>
<div class="ln" style="top:758px">79</div>
<div class="cl" style="top:758px">                        <span class="t">/&gt;</span></div>
<div class="ln" style="top:780px">80</div>
<div class="cl" style="top:780px">                      <span class="t">&lt;/</span><span class="c">el-select</span><span class="t">&gt;</span></div>
<div class="ln" style="top:802px">81</div>
<div class="cl" style="top:802px">                    <span class="hl h6"><span class="t">&lt;/</span><span class="c">el-form-item</span><span class="t">&gt;</span></span></div>
<div class="ln" style="top:824px">82</div>
<div class="cl" style="top:824px">                  <span class="hl h5"><span class="t">&lt;/</span><span class="c">el-form</span><span class="t">&gt;</span></span></div>
<div class="ln" style="top:846px">83</div>
<div class="cl" style="top:846px">                <span class="hl h4"><span class="t">&lt;/</span><span class="c">el-card</span><span class="t">&gt;</span></span></div>
<div class="ln" style="top:868px">84</div>
<div class="cl" style="top:868px">              <span class="hl h3"><span class="t">&lt;/</span><span class="c">el-col</span><span class="t">&gt;</span></span></div>
<div class="ln" style="top:890px">85</div>
<div class="cl" style="top:890px">            <span class="t hl h2">&lt;/template&gt;</span></div>
<div class="ln" style="top:912px">86</div>
<div class="cl" style="top:912px">          <span class="t hl h1">&lt;/form-create&gt;</span></div>
<svg style="position:absolute;left:83px;top:452px" width="16" height="18" viewBox="0 0 16 18"><path d="M8 1 a5.15 5.15 0 0 0 -2.9 9.4 v1.6 h5.8 v-1.6 a5.15 5.15 0 0 0 -2.9 -9.4 z" fill="#F2C55C"/><path d="M5.2 13.6 h5.6 M5.9 15.7 h4.2" stroke="#D4D4D4" stroke-width="1.2"/></svg>
<div id="pink"></div>
<div id="tabs"><div id="tab"><svg style="left:13px;top:12px" width="16" height="16" viewBox="0 0 16 16"><path d="M1 2.5 H4.2 L8 9.2 L11.8 2.5 H15 L8 14.5 Z" fill="#3DBF8A"/><path d="M4.2 2.5 H6.4 L8 5.4 L9.6 2.5 H11.8 L8 9.2 Z" fill="#35495E"/></svg><span class="nm">index.vue</span><svg style="left:100px;top:12px" width="16" height="16" viewBox="0 0 16 16"><path d="M4.2 4.2 L11.8 11.8 M11.8 4.2 L4.2 11.8" stroke="#7F8A90" stroke-width="1"/></svg></div></div>
</div>
<div id="topline"></div>
</body></html>
